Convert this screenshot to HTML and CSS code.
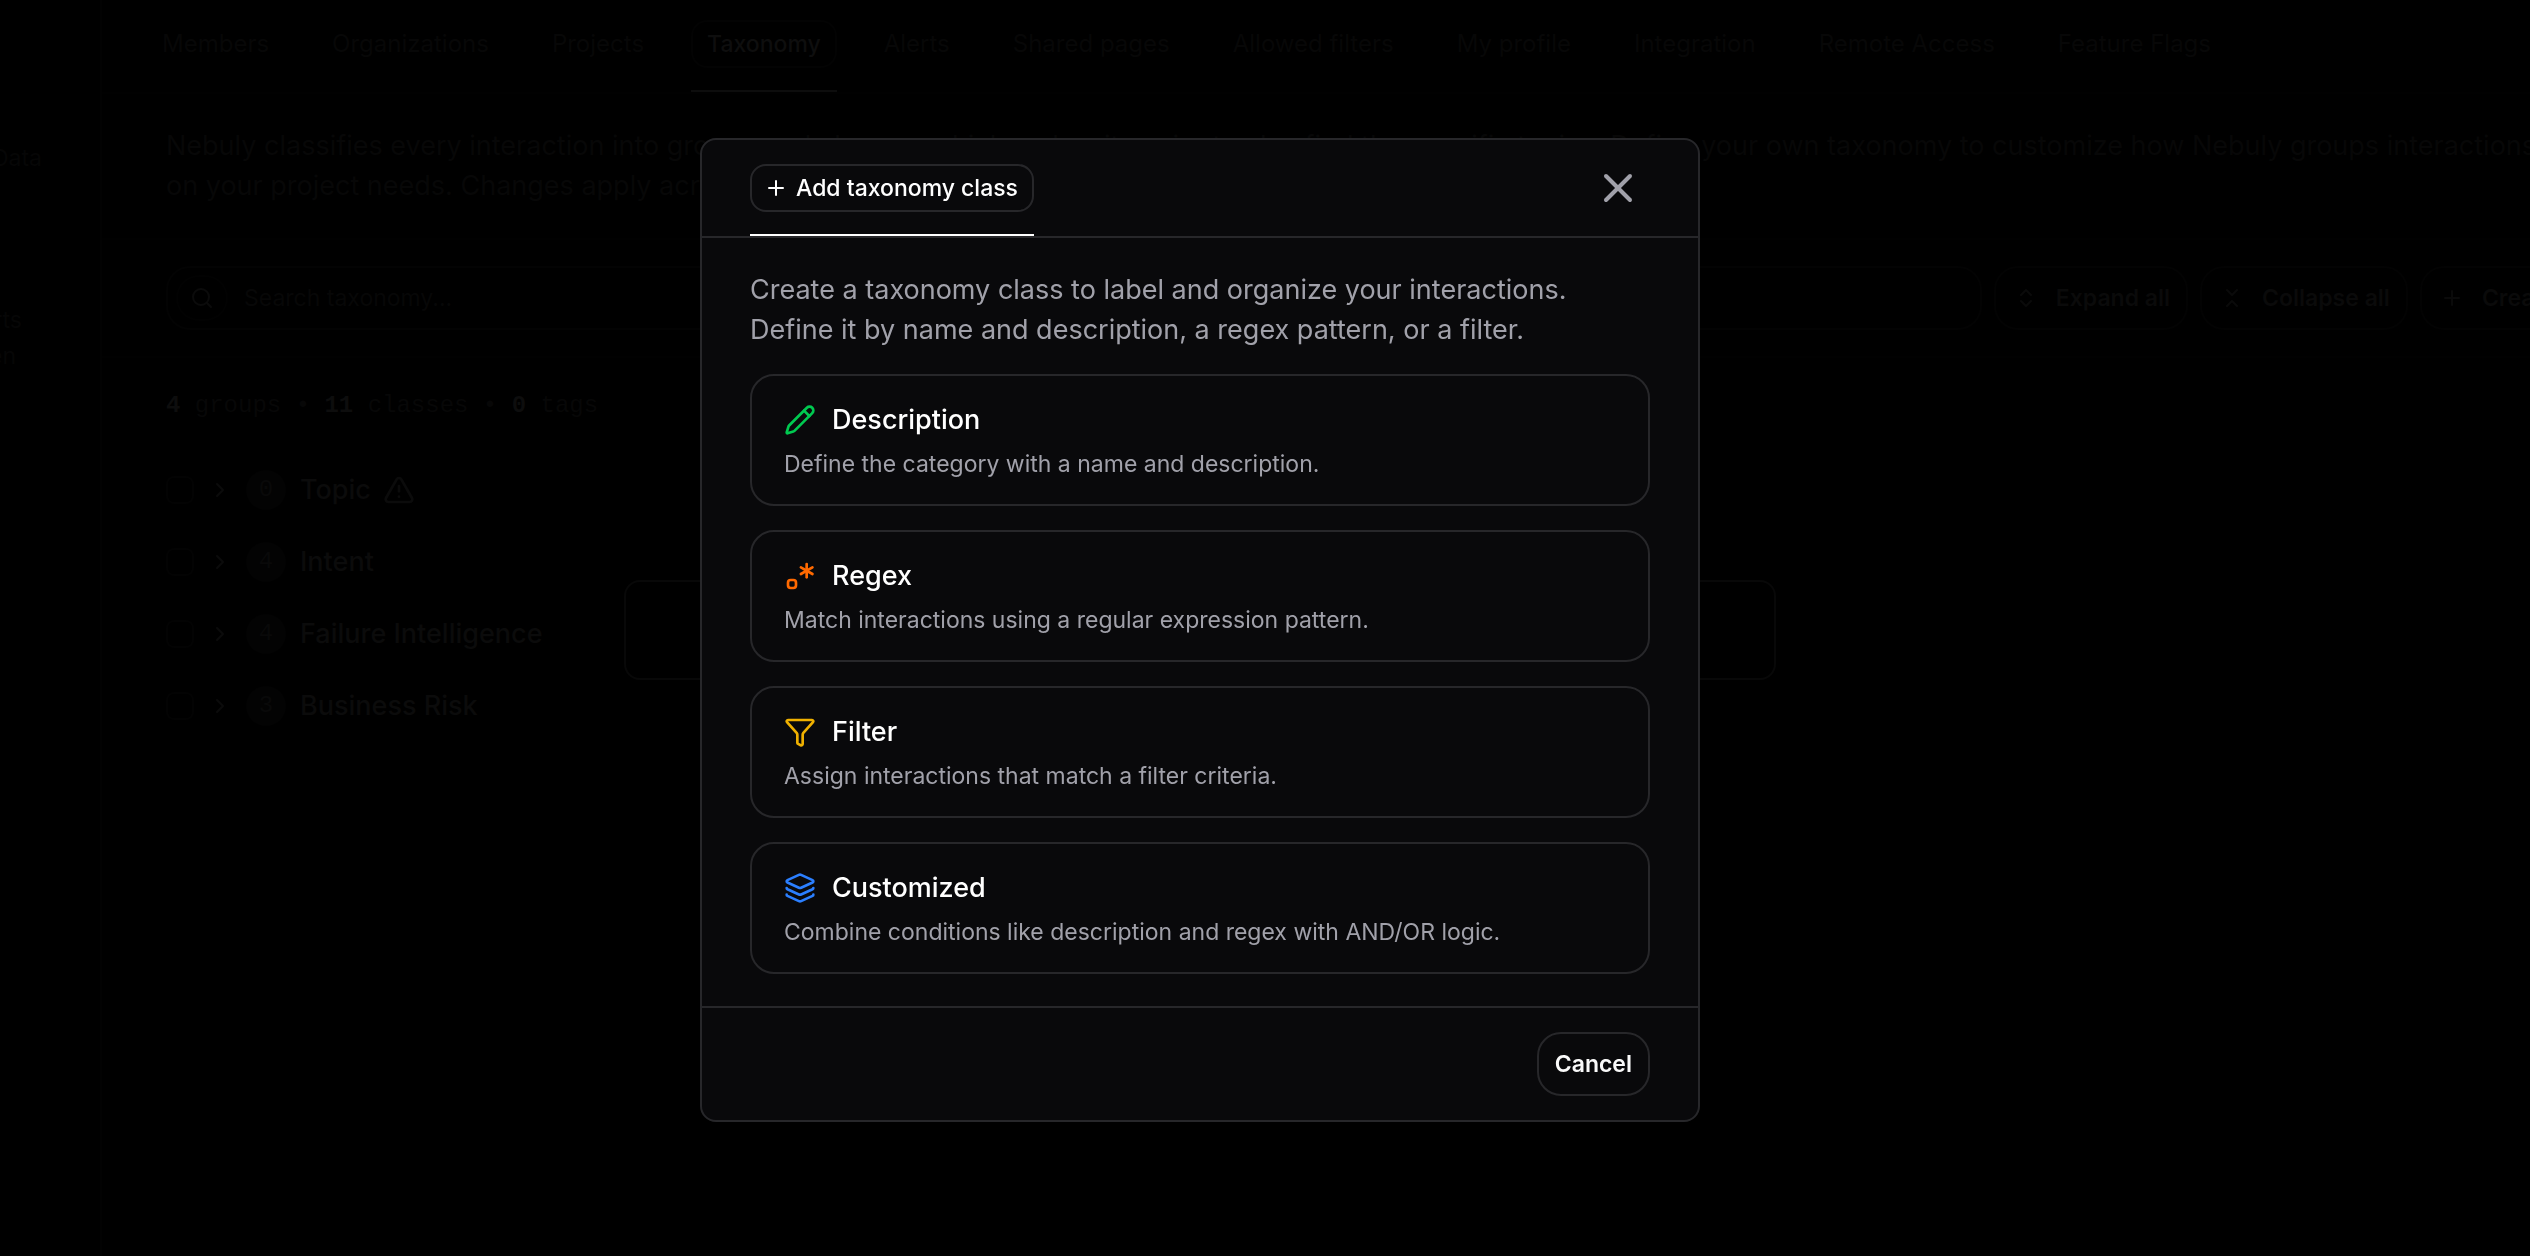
FILE: index.html
```html
<!DOCTYPE html>
<html lang="en">
<head>
<meta charset="utf-8">
<meta name="viewport" content="width=device-width, initial-scale=1">
<title>Taxonomy settings</title>
<link rel="stylesheet" href="styles.css">
</head>
<body>
<div class="app">
  <aside class="sidebar">
    <div class="side-group"><a href="#" class="side-link">Data</a></div>
    <a href="#" class="side-link side-reports">Reports</a>
    <a href="#" class="side-link side-hidden">Hidden</a>
  </aside>
  <main class="main">
    <nav class="tabs">
      <a class="tab" href="#">Members</a>
      <a class="tab" href="#">Organizations</a>
      <a class="tab" href="#">Projects</a>
      <a class="tab tab-active" href="#">Taxonomy</a>
      <a class="tab" href="#">Alerts</a>
      <a class="tab" href="#">Shared pages</a>
      <a class="tab" href="#">Allowed filters</a>
      <a class="tab" href="#">My profile</a>
      <a class="tab" href="#">Integration</a>
      <a class="tab" href="#">Remote Access</a>
      <a class="tab" href="#">Feature Flags</a>
    </nav>
    <p class="intro">Nebuly classifies every interaction into groups and classes, which makes it easier to also find the specific topics. Define your own taxonomy to customize how Nebuly groups interactions<br>on your project needs. Changes apply across the project.</p>
    <div class="toolbar">
      <label class="search">
        <span class="search-icon"><svg class="icon-sm" viewBox="0 0 24 24"><circle cx="11" cy="11" r="8"/><path d="m21 21-4.3-4.3"/></svg></span>
        <input type="text" placeholder="Search taxonomy..." aria-label="Search taxonomy">
      </label>
      <button class="tool" type="button"><svg class="icon-sm" viewBox="0 0 24 24"><path d="m7 15 5 5 5-5"/><path d="m7 9 5-5 5 5"/></svg>Expand all</button>
      <button class="tool" type="button"><svg class="icon-sm" viewBox="0 0 24 24"><path d="m7 20 5-5 5 5"/><path d="m7 4 5 5 5-5"/></svg>Collapse all</button>
      <button class="tool" type="button"><svg class="icon-sm" viewBox="0 0 24 24"><path d="M5 12h14"/><path d="M12 5v14"/></svg>Create</button>
    </div>
    <p class="summary"><b>4</b> groups • <b>11</b> classes • <b>0</b> tags</p>
    <ul class="groups">
      <li class="group"><input type="checkbox" aria-label="Topic"><svg class="icon-sm" viewBox="0 0 24 24"><path d="m9 18 6-6-6-6"/></svg><span class="count">0</span><span>Topic</span><svg class="icon warn" viewBox="0 0 24 24"><path d="m21.73 18-8-14a2 2 0 0 0-3.48 0l-8 14A2 2 0 0 0 4 21h16a2 2 0 0 0 1.73-3"/><path d="M12 9v4"/><path d="M12 17h.01"/></svg></li>
      <li class="group"><input type="checkbox" aria-label="Intent"><svg class="icon-sm" viewBox="0 0 24 24"><path d="m9 18 6-6-6-6"/></svg><span class="count">4</span><span>Intent</span></li>
      <li class="group"><input type="checkbox" aria-label="Failure Intelligence"><svg class="icon-sm" viewBox="0 0 24 24"><path d="m9 18 6-6-6-6"/></svg><span class="count">4</span><span>Failure Intelligence</span></li>
      <li class="group"><input type="checkbox" aria-label="Business Risk"><svg class="icon-sm" viewBox="0 0 24 24"><path d="m9 18 6-6-6-6"/></svg><span class="count">3</span><span>Business Risk</span></li>
    </ul>
  </main>
</div>

<div class="overlay"><div class="backing"></div></div>
<div class="overlay">
  <section class="dialog" role="dialog" aria-modal="true" aria-label="Add taxonomy class">
    <header class="dialog-head">
      <div class="dialog-tab">
        <button class="dialog-pill" type="button"><svg class="icon-sm" viewBox="0 0 24 24"><path d="M5 12h14"/><path d="M12 5v14"/></svg>Add taxonomy class</button>
      </div>
      <button class="close" type="button" aria-label="Close"><svg class="icon-close" viewBox="0 0 24 24"><path d="M18 6 6 18"/><path d="m6 6 12 12"/></svg></button>
    </header>
    <div class="dialog-body">
      <p class="lead">Create a taxonomy class to label and organize your interactions.<br>Define it by name and description, a regex pattern, or a filter.</p>
      <button class="option" type="button">
        <span class="option-title"><svg class="icon green" viewBox="0 0 24 24"><path d="M21.174 6.812a1 1 0 0 0-3.986-3.987L3.842 16.174a2 2 0 0 0-.5.83l-1.321 4.352a.5.5 0 0 0 .623.622l4.353-1.32a2 2 0 0 0 .83-.497z"/><path d="m15 5 4 4"/></svg>Description</span>
        <span class="option-text">Define the category with a name and description.</span>
      </button>
      <button class="option" type="button">
        <span class="option-title"><svg class="icon orange" viewBox="0 0 24 24"><path d="M17 3v10"/><path d="m12.67 5.5 8.66 5"/><path d="m12.67 10.5 8.66-5"/><path d="M9 17a2 2 0 0 0-2-2H5a2 2 0 0 0-2 2v2a2 2 0 0 0 2 2h2a2 2 0 0 0 2-2z"/></svg>Regex</span>
        <span class="option-text">Match interactions using a regular expression pattern.</span>
      </button>
      <button class="option" type="button">
        <span class="option-title"><svg class="icon yellow" viewBox="0 0 24 24"><path d="M10 20a1 1 0 0 0 .553.895l2 1A1 1 0 0 0 14 21v-7a2 2 0 0 1 .517-1.341L21.74 4.67A1 1 0 0 0 21 3H3a1 1 0 0 0-.742 1.67l7.225 7.989A2 2 0 0 1 10 14z"/></svg>Filter</span>
        <span class="option-text">Assign interactions that match a filter criteria.</span>
      </button>
      <button class="option" type="button">
        <span class="option-title"><svg class="icon blue" viewBox="0 0 24 24"><path d="M12.83 2.18a2 2 0 0 0-1.66 0L2.6 6.08a1 1 0 0 0 0 1.83l8.58 3.91a2 2 0 0 0 1.66 0l8.58-3.9a1 1 0 0 0 0-1.83z"/><path d="M2 12a1 1 0 0 0 .58.91l8.6 3.91a2 2 0 0 0 1.65 0l8.58-3.9A1 1 0 0 0 22 12"/><path d="M2 17a1 1 0 0 0 .58.91l8.6 3.91a2 2 0 0 0 1.65 0l8.58-3.9A1 1 0 0 0 22 17"/></svg>Customized</span>
        <span class="option-text">Combine conditions like description and regex with AND/OR logic.</span>
      </button>
    </div>
    <footer class="dialog-foot"><button class="cancel" type="button">Cancel</button></footer>
  </section>
</div>
</body>
</html>
```
FILE: styles.css
```css
* { box-sizing: border-box; }

body {
  margin: 0;
  min-height: 100vh;
  overflow: hidden;
  background: #000;
  color: #0a0a0a;
  font: 400 23px/32px Inter, sans-serif;
}

p, ul { margin: 0; padding: 0; }
a { color: inherit; text-decoration: none; }
button, input { font: inherit; color: inherit; background: none; border: 0; margin: 0; padding: 0; }

svg {
  flex: none;
  fill: none;
  stroke: currentColor;
  stroke-width: 2;
  stroke-linecap: round;
  stroke-linejoin: round;
}
.icon { width: 32px; height: 32px; }
.icon-sm { width: 24px; height: 24px; }

/* Page behind the dialog, dimmed */
.app { display: grid; grid-template-columns: 102px minmax(0, 1fr); min-height: 100vh; }

.sidebar {
  display: flex;
  flex-direction: column;
  align-items: flex-end;
  padding: 126px 58px 0 0;
  overflow: hidden;
  border-right: 2px solid #020202;
  color: #060606;
}
.side-group { padding: 16px 0; }
.side-reports { margin: 114px 20px 0 0; }
.side-hidden { margin: 4px 26px 0 0; }

.main { overflow: hidden; white-space: nowrap; }

.tabs {
  display: flex;
  gap: 31px;
  height: 94px;
  padding: 20px 0 0 44px;
  border-bottom: 2px solid #010101;
  color: #070707;
  font-size: 24px;
}
.tab { height: 48px; padding: 6px 14px; border: 2px solid transparent; border-radius: 16px; }
.tab-active {
  position: relative;
  border-color: #030303;
  color: #0e0e0e;
  font-size: 23px;
  font-weight: 500;
}
.tab-active::after {
  content: "";
  position: absolute;
  inset: auto -2px -26px;
  height: 2px;
  background: #0d0d0d;
}

.intro { padding: 32px 0 32px 64px; font-size: 27px; line-height: 40px; color: #070707; }

.toolbar {
  display: grid;
  grid-template-columns: 1fr repeat(3, max-content);
  gap: 12px;
  margin-right: -44px;
  padding: 26px 0 26px 64px;
  border: solid #010101;
  border-width: 2px 0;
}
.search, .tool {
  display: flex;
  align-items: center;
  height: 64px;
  border: 2px solid #030303;
  border-radius: 24px;
}
.search { gap: 16px; padding: 0 8px; color: #080808; }
.search-icon { display: grid; place-items: center; width: 52px; height: 46px; border: 2px solid #020202; border-radius: 24px; color: #0b0b0b; }
.search input { flex: 1; outline: 0; }
.search input::placeholder { color: #070707; opacity: 1; }
.tool { gap: 18px; padding: 0 16px 0 18px; color: #0a0a0a; font-weight: 600; }

.summary {
  padding: 32px 64px;
  color: #070707;
  font-family: "Liberation Mono", monospace;
  font-size: 24px;
}
.summary b { color: #0d0d0d; }

.groups { list-style: none; padding-left: 64px; }
.group { display: flex; align-items: center; height: 72px; font-size: 27px; font-weight: 500; color: #0b0b0b; }
.group input { appearance: none; width: 28px; height: 28px; margin-right: 14px; border: 2px solid #030303; border-radius: 8px; }
.count {
  width: 40px;
  margin: 0 14px;
  border-radius: 20px;
  background: #030303;
  color: #090909;
  font: 24px/40px "Liberation Mono", monospace;
  text-align: center;
}
.warn { margin-left: 12px; }

/* Layers above the page */
.overlay { position: fixed; inset: 0; display: grid; place-items: center; padding: 4px 24px 0; }
.backing {
  width: 100%;
  max-width: 1152px;
  height: 100px;
  margin-left: -130px;
  border: 2px solid #080808;
  border-radius: 16px;
}

.dialog {
  width: 100%;
  max-width: 1000px;
  margin-left: -130px;
  border: 2px solid #27272a;
  border-radius: 16px;
  background: #09090b;
  color: #fafafa;
}
.dialog-head {
  display: flex;
  justify-content: space-between;
  padding: 0 48px;
  border-bottom: 2px solid #27272a;
}
.dialog-tab { padding: 24px 0 22px; border-bottom: 2px solid #fff; }
.dialog-pill {
  display: flex;
  align-items: center;
  gap: 8px;
  height: 48px;
  padding: 0 14px 0 12px;
  border: 2px solid #27272a;
  border-radius: 16px;
  color: #fff;
  font-weight: 500;
}
.close { display: grid; place-items: center; width: 64px; color: #a1a1aa; }
.icon-close { width: 48px; height: 48px; }

.dialog-body { display: grid; gap: 24px; padding: 32px 48px; }
.lead { color: #a1a1aa; font-size: 27px; line-height: 40px; }
.option {
  display: grid;
  gap: 8px;
  padding: 24px 32px;
  border: 2px solid #27272a;
  border-radius: 24px;
  text-align: left;
}
.option-title { display: flex; align-items: center; gap: 16px; font-size: 27px; line-height: 40px; font-weight: 500; color: #fff; }
.option-text { color: #a1a1aa; }
.green { color: #00c950; }
.orange { color: #ff6900; }
.yellow { color: #f0b100; }
.blue { color: #2b7fff; }

.dialog-foot { display: flex; justify-content: flex-end; padding: 24px 48px; border-top: 2px solid #27272a; }
.cancel { height: 64px; padding: 0 16px; border: 2px solid #27272a; border-radius: 24px; font-weight: 600; }
```
